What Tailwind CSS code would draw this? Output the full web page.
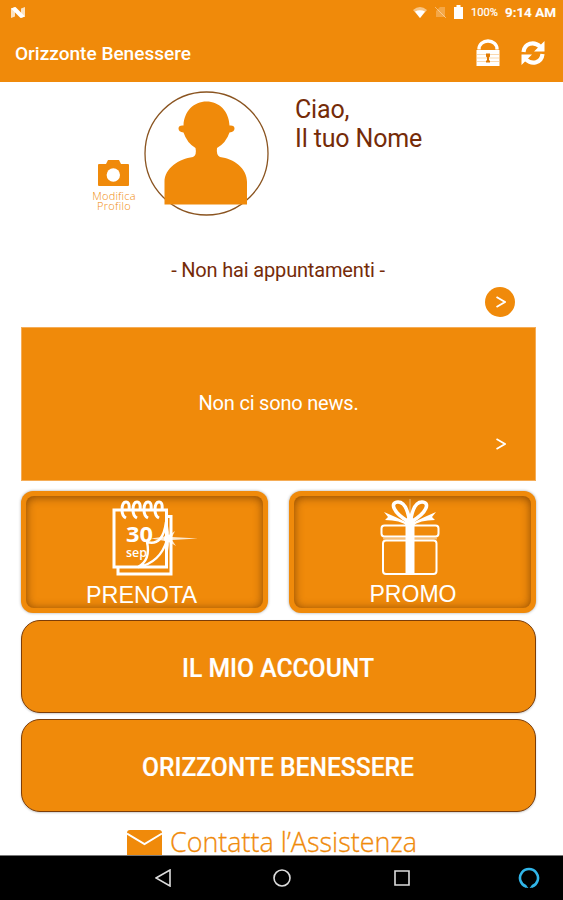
<!DOCTYPE html>
<html lang="it">

<head>
    <meta charset="UTF-8">
    <meta name="viewport" content="width=device-width, initial-scale=1.0">
    <title>Orizzonte Benessere</title>
    <script src="https://cdn.jsdelivr.net/npm/@tailwindcss/browser@4"></script>
</head>

<body class="w-[563px] h-[900px] overflow-hidden flex flex-col bg-white font-[Roboto,sans-serif]">
    <!-- Status bar + title -->
    <header class="h-[82px] shrink-0 bg-[#f08a0a] text-white">
        <div class="h-6 flex items-center justify-between pl-[11px] pr-[6px]">
            <svg class="w-[14px] h-[11px]" viewBox="0 0 14 11">
                <path d="M0 1.500L4 0V9.500L0 11zM10 1.500L14 0v9.500L10 11z" fill="#fff" opacity=".75" />
                <path d="M0 1.500L4.500 0L14 9.500L9.500 11z" fill="#fff" />
            </svg>
            <div class="flex items-center">
                <svg class="w-[14px] h-[11px]" viewBox="0 0 14 11">
                    <path d="M0 3Q7-3 14 3L7 11z" fill="#fff" opacity=".5" />
                    <path d="M2 4.500Q7 2 12 4.500L7 11z" fill="#fff" />
                </svg>
                <svg class="w-[11px] h-3 ml-2" viewBox="0 0 11 12">
                    <path d="M1 5l4-4h5v10H1z" fill="#fff" opacity=".25" />
                    <path d="M0 1l11 11" stroke="#fff" opacity=".4" />
                </svg>
                <svg class="w-[9px] h-[14px] ml-2" viewBox="0 0 9 14">
                    <path d="M2.500 0h4v2H9v12H0V2h2.500z" fill="#fff" />
                </svg>
                <svg class="w-[87px] h-4 ml-[7px]" viewBox="0 0 87 16">
                    <text x="1" y="12" font-size="11" fill="#fff" stroke="#fff" stroke-width=".2" textLength="27" lengthAdjust="spacingAndGlyphs">100%</text>
                    <text x="35" y="12.500" font-size="13" font-weight="600" fill="#fff" stroke="#fff" stroke-width=".2" textLength="51" lengthAdjust="spacingAndGlyphs">9:14 AM</text>
                </svg>
            </div>
        </div>
        <div class="h-[58px] flex items-center justify-between pl-[15px] pr-[18px]">
            <svg class="w-[180px] h-6" viewBox="0 0 180 24">
                <text x="0" y="18.500" font-size="18.500" font-weight="500" fill="#fff" textLength="176" lengthAdjust="spacingAndGlyphs">Orizzonte Benessere</text>
            </svg>
            <div class="flex items-center gap-[21px]">
                <svg class="w-6 h-7" viewBox="0 0 24 28">
                    <path d="M3 10.500V10a9 8 0 0 1 18 0v.5" fill="none" stroke="#fff" stroke-width="3.400" />
                    <rect x="0.500" y="11" width="23" height="16" fill="#fff" />
                    <path d="M1 15.500h22M1 19h22M1 22.500h22" stroke="#f08a0a" stroke-width=".8" opacity=".4" />
                    <path d="M10 14.500h4v3l-1 1v3h1v2h-4v-2h1v-3l-1-1z" fill="#e27a00" />
                </svg>
                <svg class="w-6 h-[26px]" viewBox="0 0 24 26">
                    <path d="M2.500 12C3.500 3 13 1 19 6.500M21.500 14C20.500 23 11 25 5 19.500" fill="none" stroke="#fff" stroke-width="4.200" />
                    <path d="M23.500 1v10.500H13zM.5 25V14.500H11z" fill="#fff" />
                </svg>
            </div>
        </div>
    </header>

    <!-- Profile -->
    <section class="h-[168px] shrink-0 flex items-start text-[#752b08]">
        <div class="w-[50px] ml-[89px] mt-[78px] flex flex-col">
            <svg class="block w-[50px] h-[28px]" viewBox="0 0 50 28">
                <path d="M10 4h7l2-4h11l2 4h7q1 0 1 1v20q0 1-1 1H10q-1 0-1-1V5q0-1 1-1z" fill="#f08a0a" />
                <circle cx="24.300" cy="15" r="6.700" fill="#fff" />
            </svg>
            <p class="mt-[3px] text-center text-[11px] leading-[10px] tracking-[.2px] font-light text-[#f08a0a] font-['Open_Sans',sans-serif]">Modifica</p>
            <p class="text-center text-[11px] leading-[10px] tracking-[.3px] font-light text-[#f08a0a] font-['Open_Sans',sans-serif]">Profilo</p>
        </div>
        <svg class="w-[126px] h-[125px] ml-[4px] mt-[9px]" viewBox="0 0 126 125">
            <circle cx="63.500" cy="62.500" r="61.500" fill="#fff" stroke="#8a5420" stroke-width="1.300" />
            <path d="M63.500 10.500C76 10.500 86 20 86.500 34.500Q91.500 34 91.500 37.500T86.500 41.500Q83 52 74 57Q73 64 77 66C91 68 104 77 104 91V113.500H21.500V91C21.500 77 36 68 50 66Q54 64 52.500 57Q44 52 40.500 41.500Q35.500 41 35.500 37.500T40.500 34.500C41 20 51 10.500 63.500 10.500Z" fill="#f08a0a" />
        </svg>
        <div class="ml-[26px] mt-[13px] text-[25px] leading-[29px] tracking-[-.15px]">
            <p>Ciao,</p>
            <p>Il tuo Nome</p>
        </div>
    </section>

    <!-- Appointments -->
    <section class="h-[77px] shrink-0 flex flex-col">
        <p class="h-10 pr-[7px] text-center text-[20px] leading-[40px] tracking-[-.17px] text-[#752b08]">- Non hai appuntamenti -</p>
        <button class="self-end mr-12 -mt-[3px] w-[30px] h-[30px] rounded-full bg-[#f08a0a] flex items-center justify-center">
            <svg class="w-[10px] h-3 ml-px" viewBox="0 0 10 12">
                <path d="M.5 1L9 6L.5 11" fill="none" stroke="#fff" stroke-width="1.900" />
            </svg>
        </button>
    </section>

    <main class="flex flex-col pl-[21px] pr-[27px]">
        <!-- News -->
        <section class="h-[154px] bg-[#f08a0a] border border-[#f5ad58] text-white flex flex-col">
            <p class="pt-[60px] text-center text-[20px] leading-[30px] tracking-[-.2px]">Non ci sono news.</p>
            <svg class="self-end mr-[29px] mt-5 w-[10px] h-3" viewBox="0 0 10 12">
                <path d="M.5 1L9 6L.5 11" fill="none" stroke="#fff" stroke-width="1.700" />
            </svg>
        </section>

        <div class="mt-[10px] grid grid-cols-2 gap-[21px]">
            <button class="h-[122px] rounded-[12px] bg-[#f08a0a] p-[5px] shadow-[0_0_3px_rgba(0,0,0,0.35)]">
                <div class="h-full rounded-[8px] shadow-[inset_0_1px_10px_rgba(110,55,0,0.8)] flex justify-center">
                    <svg class="w-[237px] h-[112px] shrink-0" viewBox="-1 -1 237 112">
                        <g fill="none" stroke="#fff" stroke-width="3">
                            <path d="M87 13h52.500v57H87z" />
                            <path d="M140 19.500h4V77H91v-7" />
                            <path d="M139 25C137 41 131 48 120 45Q124 63 111 70Q133 66 140 43" stroke-width="2.400" />
                            <path d="M99 21q-4-2-4-8q0-8 4-8t3 8M110 21q-4-2-4-8q0-8 4-8t3 8M121 21q-4-2-4-8q0-8 4-8t3 8M132 21q-4-2-4-8q0-8 4-8t3 8" stroke-width="3" />
                        </g>
                        <g fill="#fff" font-family="Open Sans" font-weight="700">
                            <text x="99" y="45" font-size="21" textLength="27" lengthAdjust="spacingAndGlyphs">30</text>
                            <text x="99" y="60" font-size="12.500" font-weight="600" textLength="21" lengthAdjust="spacingAndGlyphs">sep</text>
                        </g>
                        <path d="M124 41.500L138 39.500L141 29L142.500 38L148 34L145 40L171 41.500L145 43L149 49L142.500 45L141 54L138 44Z" fill="#fff" opacity=".8" />
                        <circle cx="141" cy="41.500" r="4" fill="#fff" />
                        <text x="59" y="106" font-size="24.500" font-family="Liberation Sans" fill="#fff" textLength="111" lengthAdjust="spacingAndGlyphs">PRENOTA</text>
                    </svg>
                </div>
            </button>
            <button class="h-[122px] rounded-[12px] bg-[#f08a0a] p-[5px] shadow-[0_0_3px_rgba(0,0,0,0.35)]">
                <div class="h-full rounded-[8px] shadow-[inset_0_1px_10px_rgba(110,55,0,0.8)] flex justify-center">
                    <svg class="w-[237px] h-[112px] shrink-0" viewBox="-1 -1 237 112">
                        <g fill="none" stroke="#fff" stroke-width="2">
                            <rect x="86.500" y="28.500" width="57" height="11" rx="3" />
                            <rect x="88" y="43.500" width="53.500" height="33.500" rx="3" />
                        </g>
                        <path d="M110.500 27h9v50h-9z" fill="#fff" />
                        <path d="M88 41.500h54" stroke="#fff" stroke-width="2" opacity=".45" />
                        <path d="M114 25C97 15 95 5 103 5C110 5 113 14 114.500 24M116 25C133 15 135 5 127 5C120 5 117 14 115.500 24" fill="none" stroke="#fff" stroke-width="3.600" />
                        <path d="M113 26Q101 20 89 15L93 20L90 23Q105 23 113 29zM117 26Q129 20 141 15L137 20L140 23Q125 23 117 29z" fill="#fff" />
                        <circle cx="115" cy="25.500" r="5" fill="#fff" />
                        <path d="M115 2v24" stroke="#fff" stroke-width="1" opacity=".5" />
                        <text x="74.500" y="104.500" font-size="24" font-family="Liberation Sans" fill="#fff" textLength="87" lengthAdjust="spacingAndGlyphs">PROMO</text>
                    </svg>
                </div>
            </button>
        </div>

        <button class="mt-[7px] h-[93px] rounded-[19px] border border-[#7c3d08] bg-[#f08a0a] flex items-center justify-center shadow-[0_1px_2px_rgba(0,0,0,0.2)]">
            <svg class="w-[300px] h-9" viewBox="0 0 300 36">
                <text x="53" y="27.800" font-size="25" font-weight="500" fill="#fff" stroke="#fff" stroke-width=".2" textLength="192" lengthAdjust="spacingAndGlyphs">IL MIO ACCOUNT</text>
            </svg>
        </button>
        <button class="mt-[6px] h-[93px] rounded-[19px] border border-[#7c3d08] bg-[#f08a0a] flex items-center justify-center shadow-[0_1px_2px_rgba(0,0,0,0.2)]">
            <svg class="w-[300px] h-9" viewBox="0 0 300 36">
                <text x="13" y="27.800" font-size="25" font-weight="500" fill="#fff" stroke="#fff" stroke-width=".2" textLength="272" lengthAdjust="spacingAndGlyphs">ORIZZONTE BENESSERE</text>
            </svg>
        </button>
    </main>

    <!-- Support link -->
    <a class="flex-1 min-h-0 flex items-start pl-[127px]">
        <svg class="w-[300px] h-[43px] shrink-0" viewBox="0 0 300 43">
            <path d="M3 18h29q3 0 3 3v22H0V21q0-3 3-3z" fill="#f08a0a" />
            <path d="M0 21.500L17.500 32L35 21.500" fill="none" stroke="#fff" stroke-width="2" />
            <text x="43" y="39.500" font-size="28" font-family="Open Sans" font-weight="300" fill="#f08a0a" stroke="#f08a0a" stroke-width=".3" textLength="247" lengthAdjust="spacingAndGlyphs">Contatta l’Assistenza</text>
        </svg>
    </a>

    <!-- Navigation bar -->
    <nav class="h-[45px] shrink-0 bg-black border-t border-[#777] flex items-center pl-[155px] pr-[23px]">
        <svg class="w-4 h-[18px]" viewBox="0 0 16 18">
            <path d="M1 9L15 1v16z" fill="none" stroke="#ddd" stroke-width="1.600" />
        </svg>
        <svg class="w-[18px] h-[18px] ml-[102px]" viewBox="0 0 18 18">
            <circle cx="9" cy="9" r="8" fill="none" stroke="#ddd" stroke-width="1.600" />
        </svg>
        <svg class="w-4 h-4 ml-[103px]" viewBox="0 0 16 16">
            <path d="M1 1h14v14H1z" fill="none" stroke="#ddd" stroke-width="1.600" />
        </svg>
        <svg class="w-[22px] h-[22px] ml-auto" viewBox="0 0 22 22">
            <path d="M8 19.500A9 9 0 1 1 14 19.500" fill="none" stroke="#31b5e8" stroke-width="2.600" />
            <path d="M7.500 17.500L10.500 21L7 20.500zM14.500 17.500L11.500 21L15 20.500z" fill="#31b5e8" />
        </svg>
    </nav>
</body>

</html>
